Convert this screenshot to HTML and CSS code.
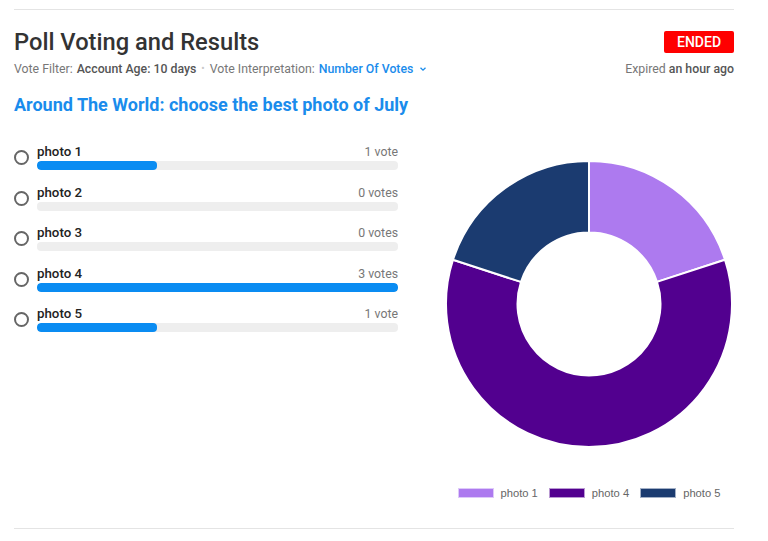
FILE: index.html
```html
<!DOCTYPE html>
<html>
<head>
<meta charset="utf-8">
<link rel="stylesheet" href="styles.css">
</head>
<body>
<div class="card">
  <div class="head">
    <div class="head-main">
      <h1 class="title">Poll Voting and Results</h1>
      <div class="meta">
        <span class="lbl">Vote Filter:</span> <span class="val">Account Age: 10 days</span>
        <span class="dot">•</span>
        <span class="lbl">Vote Interpretation:</span> <span class="link">Number Of Votes</span>
        <svg class="chev" width="10" height="10" viewBox="0 0 10 10"><path d="M2.5 3.8 L5 6.2 L7.5 3.8" fill="none" stroke="#1a8cec" stroke-width="1.3"/></svg>
      </div>
    </div>
    <div class="status">
      <span class="badge">ENDED</span>
      <div class="expired">Expired <b>an hour ago</b></div>
    </div>
  </div>
  <h2 class="question">Around The World: choose the best photo of July</h2>
  <div class="body">
    <ul class="options">
      <li class="opt"><span class="radio"></span><div class="opt-main"><div class="opt-top"><span class="name">photo 1</span><span class="count">1 vote</span></div><div class="bar"><div class="fill" style="width:33.33%"></div></div></div></li>
      <li class="opt"><span class="radio"></span><div class="opt-main"><div class="opt-top"><span class="name">photo 2</span><span class="count">0 votes</span></div><div class="bar"><div class="fill" style="width:0%"></div></div></div></li>
      <li class="opt"><span class="radio"></span><div class="opt-main"><div class="opt-top"><span class="name">photo 3</span><span class="count">0 votes</span></div><div class="bar"><div class="fill" style="width:0%"></div></div></div></li>
      <li class="opt"><span class="radio"></span><div class="opt-main"><div class="opt-top"><span class="name">photo 4</span><span class="count">3 votes</span></div><div class="bar"><div class="fill" style="width:100%"></div></div></div></li>
      <li class="opt"><span class="radio"></span><div class="opt-main"><div class="opt-top"><span class="name">photo 5</span><span class="count">1 vote</span></div><div class="bar"><div class="fill" style="width:33.33%"></div></div></div></li>
    </ul>
    <div class="chart">
      <svg class="donut" width="290" height="290" viewBox="0 0 290 290">
        <g stroke="#ffffff" stroke-width="2" stroke-linejoin="round">
          <path fill="#ad7aef" d="M145 2 A143 143 0 0 1 281 100.81 L213 122.91 A71.5 71.5 0 0 0 145 73.5 Z"/>
          <path fill="#52008f" d="M281 100.81 A143 143 0 1 1 9 100.81 L77 122.91 A71.5 71.5 0 1 0 213 122.91 Z"/>
          <path fill="#1b3b70" d="M9 100.81 A143 143 0 0 1 145 2 L145 73.5 A71.5 71.5 0 0 0 77 122.91 Z"/>
        </g>
      </svg>
      <div class="legend">
        <span class="item"><span class="sw sw1"></span>photo 1</span>
        <span class="item"><span class="sw sw4"></span>photo 4</span>
        <span class="item"><span class="sw sw5"></span>photo 5</span>
      </div>
    </div>
  </div>
</div>
</body>
</html>
```

FILE: styles.css
```css
* { box-sizing: border-box; }
html, body { margin: 0; padding: 0; background: #ffffff; }
body { font-family: Roboto, "Liberation Sans", Arial, sans-serif; color: #333; }

.card {
  margin: 9px 0 0 14px;
  width: 720px;
  border-top: 1px solid #e4e4e4;
  border-bottom: 1px solid #e4e4e4;
  height: 520px;
}

.head {
  display: flex;
  justify-content: space-between;
  align-items: flex-start;
  padding-top: 18px;
}
.title {
  margin: 0;
  font-size: 23.7px;
  line-height: 28px;
  font-weight: 500;
  color: #333;
}
.meta {
  margin-top: 4px;
  font-size: 12.3px;
  line-height: 18px;
  color: #777;
  display: flex;
  align-items: center;
  gap: 4px;
}
.meta .val { color: #555; font-weight: 500; }
.meta .dot { color: #c8c8c8; font-size: 10px; margin: 0 1px; }
.meta .link { color: #1a8cec; font-weight: 500; }
.chev { margin-left: 1px; }

.status {
  display: flex;
  flex-direction: column;
  align-items: flex-end;
  padding-top: 3px;
}
.badge {
  background: #ff0000;
  color: #fff;
  font-size: 14px;
  font-weight: 500;
  line-height: 22px;
  height: 22px;
  width: 70px;
  text-align: center;
  border-radius: 2px;
}
.expired {
  margin-top: 7px;
  font-size: 12.3px;
  line-height: 18px;
  color: #777;
}
.expired b { font-weight: 500; color: #555; }

.question {
  margin: 15px 0 0 0;
  font-size: 18px;
  line-height: 24px;
  font-weight: 700;
  color: #1a8cec;
}

.body {
  display: grid;
  grid-template-columns: 384px 290px;
  column-gap: 46px;
  margin-top: 27px;
}
.options {
  list-style: none;
  margin: 0;
  padding: 0;
  display: flex;
  flex-direction: column;
  gap: 14.5px;
}
.opt {
  display: flex;
  align-items: center;
  gap: 8px;
  height: 26px;
}
.radio {
  width: 15px;
  height: 15px;
  border: 2px solid #666;
  border-radius: 50%;
  flex: none;
  margin-top: 1px;
}
.opt-main { flex: 1; }
.opt-top {
  display: flex;
  justify-content: space-between;
  align-items: baseline;
  height: 16px;
}
.name {
  font-size: 13.3px;
  line-height: 16px;
  font-weight: 500;
  color: #222;
}
.count {
  font-size: 12.3px;
  line-height: 16px;
  color: #777;
}
.bar {
  margin-top: 1px;
  height: 9px;
  background: #eeeeee;
  border-radius: 4px;
  overflow: hidden;
}
.fill {
  height: 100%;
  background: #0a8cf2;
  border-radius: 4px;
}

.chart {
  display: flex;
  flex-direction: column;
  align-items: center;
  margin-top: 15px;
}
.donut { display: block; }
.legend {
  margin-top: 37px;
  display: flex;
  gap: 11px;
  font-family: "Liberation Sans", Arial, sans-serif;
  font-size: 11.2px;
  line-height: 14px;
  color: #666;
}
.item { display: flex; align-items: center; }
.sw {
  width: 36px;
  height: 10px;
  margin-right: 7px;
  border: 1px solid rgba(255,255,255,0.6);
}
.sw1 { background: #ad7aef; }
.sw4 { background: #52008f; }
.sw5 { background: #1b3b70; }
```
